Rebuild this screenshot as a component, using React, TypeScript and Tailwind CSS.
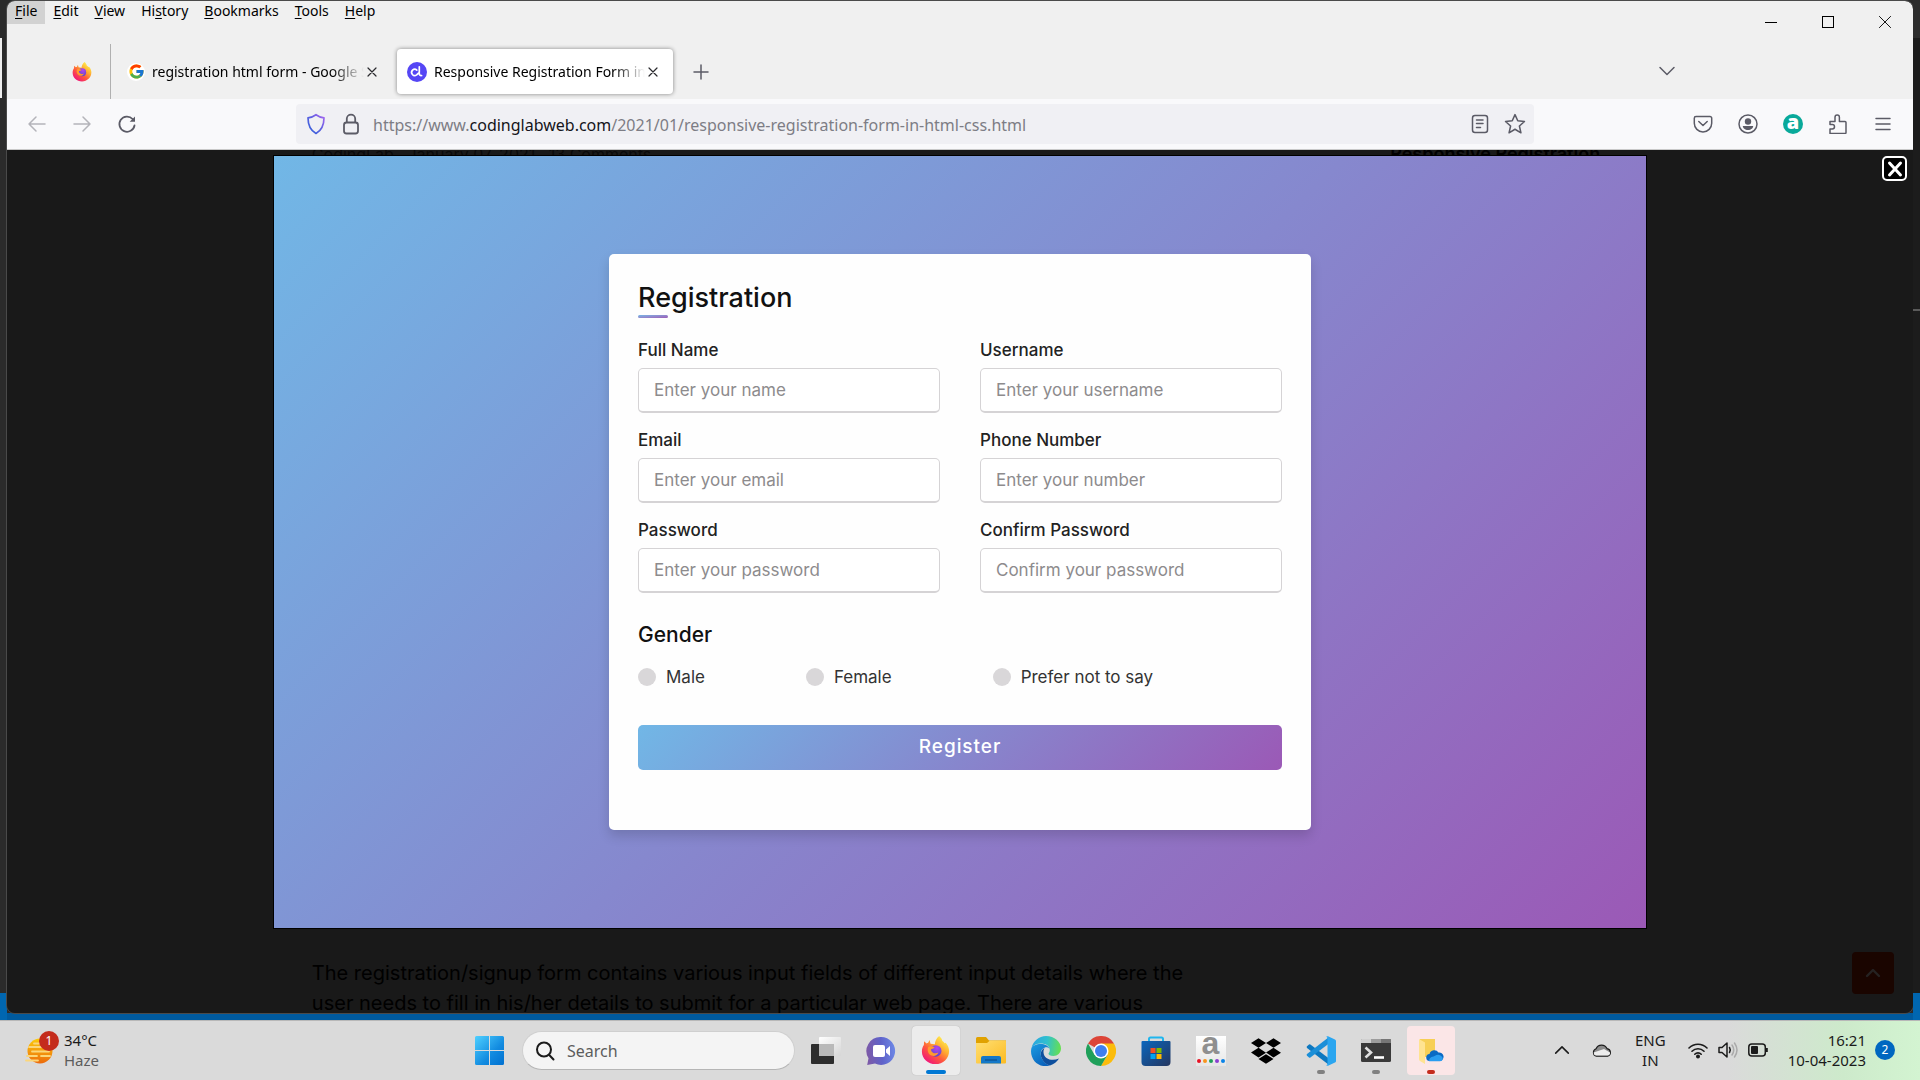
import React, { useId } from "react";
import { FcGoogle } from "react-icons/fc";
import { FaDropbox } from "react-icons/fa";

const uiFont = "font-['Noto_Sans','Open_Sans',sans-serif]";

function FirefoxLogo({ size }: { size: number }) {
  const id = useId();
  return (
    <svg width={size} height={size} viewBox="0 0 32 32" aria-hidden="true">
      <defs>
        <linearGradient id={`${id}a`} x1="0.85" y1="0.1" x2="0.2" y2="0.95">
          <stop offset="0" stopColor="#fff14f" />
          <stop offset="0.35" stopColor="#ffa930" />
          <stop offset="0.62" stopColor="#ff5a3c" />
          <stop offset="1" stopColor="#f0147c" />
        </linearGradient>
        <radialGradient id={`${id}b`} cx="0.6" cy="0.25" r="0.8">
          <stop offset="0" stopColor="#b645f0" />
          <stop offset="1" stopColor="#5147c8" />
        </radialGradient>
      </defs>
      <path
        d="M20 0c2 1.600 3.200 3.500 3.600 5.500 1.200.6 2 1.500 2.400 2.500l1.200-.6c2.600 2.800 3.800 6 3.800 9.100C31 25 24.300 31 16 31S1 25 1 17c0-3 .8-5.300 2.200-7.200l.2-4 2.800 2.400c.5-.3 1-.4 1.500-.4L9.500 4.500l1 4 4.800.6C15.300 6.200 17 2.500 20 0Z"
        fill={`url(#${id}a)`}
      />
      <circle cx="16.200" cy="16.500" r="6.400" fill={`url(#${id}b)`} />
      <path
        d="M8 12c2.500-1.300 5-1 7 .8-1 1.600-3.200 1.600-4 2 .3 3.800 4.500 5.500 8.200 3.400-1.300 3.600-5.200 4.900-8.300 3.100C8 19.700 6.500 15.500 8 12Z"
        fill="#ff9a2e"
      />
    </svg>
  );
}

function CodingLabLogo() {
  return (
    <svg width="20" height="20" viewBox="0 0 20 20" aria-hidden="true">
      <circle cx="10" cy="10" r="10" fill="#5546f5" />
      <path
        d="M9.800 8.100A3.100 3.100 0 1 0 9.600 12.900L12.300 10.500M12.300 4.800v6.700c0 1.400.9 2.200 2.300 2"
        fill="none"
        stroke="#fff"
        strokeWidth="1.700"
        strokeLinecap="round"
        strokeLinejoin="round"
      />
    </svg>
  );
}

function Line({
  children,
  size = 20,
  w = 1.5,
  className = "text-[#5b5b66]",
}: {
  children: React.ReactNode;
  size?: number;
  w?: number;
  className?: string;
}) {
  return (
    <svg
      width={size}
      height={size}
      viewBox="0 0 20 20"
      fill="none"
      stroke="currentColor"
      strokeWidth={w}
      strokeLinecap="round"
      strokeLinejoin="round"
      className={`shrink-0 ${className}`}
      aria-hidden="true"
    >
      {children}
    </svg>
  );
}

const menus: [string, string, string][] = [
  ["", "F", "ile"],
  ["", "E", "dit"],
  ["", "V", "iew"],
  ["Hi", "s", "tory"],
  ["", "B", "ookmarks"],
  ["", "T", "ools"],
  ["", "H", "elp"],
];

function BrowserHeader() {
  return (
    <header className="flex bg-[#f0f0f0] text-black">
      <div className="min-w-0 flex-1">
        <nav className="flex h-[23px]" aria-label="Menu bar">
          {menus.map(([a, u, b], i) => (
            <button
              key={b}
              className={
                i === 0
                  ? "bg-[#d2d2d2] px-2 pb-1 text-sm leading-5"
                  : "px-2 pb-1 text-sm leading-5"
              }
            >
              {a}
              <u className="underline-offset-2">{u}</u>
              {b}
            </button>
          ))}
        </nav>
        <div className="flex h-[75px] items-center pt-5" role="tablist">
          <button
            role="tab"
            aria-label="Firefox"
            className="flex h-full w-[104px] items-center justify-end border-r border-[#b0b0b0] pr-[18px]"
          >
            <FirefoxLogo size={20} />
          </button>
          <div className="flex h-[45px] w-[282px] items-center pl-4">
            <button role="tab" className="flex min-w-0 flex-1 items-center gap-[7px] text-sm">
              <span className="flex size-[18px] shrink-0 items-center justify-center rounded-full bg-white">
                <FcGoogle size={17} />
              </span>
              <span className="overflow-hidden whitespace-nowrap [mask-image:linear-gradient(to_right,black_85%,transparent)]">
                registration html form - Google Search
              </span>
            </button>
            <button aria-label="Close tab" className="mr-[13px]">
              <Line size={16} w={1.5} className="text-[#2a2a2e]">
                <path d="M5 5l10 10M15 5L5 15" />
              </Line>
            </button>
          </div>
          <div className="ml-1 flex h-[45px] w-[276px] items-center rounded bg-white pl-2.5 shadow-[0_0_4px_rgba(0,0,0,0.45)]">
            <button
              role="tab"
              aria-selected="true"
              className="flex min-w-0 flex-1 items-center gap-[7px] text-sm"
            >
              <span className="shrink-0">
                <CodingLabLogo />
              </span>
              <span className="overflow-hidden whitespace-nowrap [mask-image:linear-gradient(to_right,black_85%,transparent)]">
                Responsive Registration Form in HTML
              </span>
            </button>
            <button aria-label="Close tab" className="mr-3">
              <Line size={16} className="text-[#2a2a2e]">
                <path d="M5 5l10 10M15 5L5 15" />
              </Line>
            </button>
          </div>
          <button aria-label="New tab" className="ml-[18px]">
            <Line>
              <path d="M10 3v14M3 10h14" />
            </Line>
          </button>
          <button aria-label="List all tabs" className="mr-[66px] ml-auto">
            <Line>
              <path d="M3 5.500l7 7 7-7" />
            </Line>
          </button>
        </div>
      </div>
      <div className="grid h-[42px] w-[170px] grid-cols-3">
        <button aria-label="Minimize" className="grid place-items-center">
          <span className="h-px w-3 bg-black" />
        </button>
        <button aria-label="Maximize" className="grid place-items-center">
          <span className="size-3 border border-black" />
        </button>
        <button aria-label="Close" className="grid place-items-center">
          <Line size={14} w={1.3} className="text-black">
            <path d="M2 2l16 16M18 2L2 18" />
          </Line>
        </button>
      </div>
    </header>
  );
}

function Toolbar() {
  return (
    <div className="flex h-[51px] shrink-0 items-center border-b border-[#c9c9c9] bg-[#f9f9fb] pl-5">
      <div className="flex w-[269px] shrink-0 gap-[25px]">
        <button aria-label="Back">
          <Line className="text-[#b4b4ba]">
            <path d="M18 10H2M9 3l-7 7 7 7" />
          </Line>
        </button>
        <button aria-label="Forward">
          <Line className="text-[#b4b4ba]">
            <path d="M2 10h16M11 3l7 7-7 7" />
          </Line>
        </button>
        <button aria-label="Reload">
          <Line w={1.8}>
            <path d="M17.500 11.500A7.600 7.600 0 1 1 15.600 5" />
            <path d="M18 2.500v5.300h-5.300z" fill="currentColor" stroke="none" />
          </Line>
        </button>
      </div>
      <div className="flex h-10 flex-1 items-center rounded bg-[#f0f0f4] pr-2 pl-2.5">
        <svg width="20" height="22" viewBox="0 0 20 22" aria-hidden="true">
          <defs>
            <linearGradient id="shield" x1="0" y1="1" x2="1" y2="0">
              <stop offset="0" stopColor="#2f62d9" />
              <stop offset="0.5" stopColor="#5a5fe0" />
              <stop offset="1" stopColor="#a866f0" />
            </linearGradient>
          </defs>
          <path
            d="M10 1.700c2.300 1.700 5 2.700 8 3.100 0 7.600-2.500 12.700-8 15.700-5.500-3-8-8.100-8-15.700 3-.4 5.700-1.400 8-3.100Z"
            fill="none"
            stroke="url(#shield)"
            strokeWidth="1.700"
            strokeLinejoin="round"
          />
        </svg>
        <svg width="20" height="22" viewBox="0 0 20 22" className="ml-[15px]" aria-hidden="true">
          <g fill="none" stroke="#5b5b66" strokeWidth="1.800">
            <rect x="3" y="9.500" width="14" height="11" rx="2.500" />
            <path d="M5.800 9.500V5.800a4.200 4.200 0 0 1 8.400 0v3.700" />
          </g>
        </svg>
        <div
          role="textbox"
          aria-label="Address"
          className="ml-3 min-w-0 flex-1 pt-0.5 text-base whitespace-nowrap text-[#7d7d85]"
        >
          https://www.<span className="text-[#15141a]">codinglabweb.com</span>
          /2021/01/responsive-registration-form-in-html-css.html
        </div>
        <button aria-label="Reader view">
          <Line>
            <rect x="2.500" y="1.500" width="15" height="17" rx="2.500" />
            <path d="M6.500 6h6.500M6.500 9.500h6.500M6.500 13.500h4" />
          </Line>
        </button>
        <button aria-label="Bookmark this page" className="ml-3.5">
          <Line size={22} w={1.4}>
            <path d="M10 1.500l2.500 5.600 6.100.6-4.600 4.100 1.400 6.200-5.400-3.200L4.600 18 6 11.800 1.400 7.700l6.100-.6z" />
          </Line>
        </button>
      </div>
      <div className="ml-[159px] flex items-center gap-[25px] pr-5">
        <button aria-label="Save to Pocket">
          <Line>
            <path d="M3 2.500h14a1.700 1.700 0 0 1 1.700 1.700v5a8.700 8.700 0 0 1-17.400 0v-5A1.700 1.700 0 0 1 3 2.500Z" />
            <path d="M5.800 7.500L10 11.500l4.200-4" />
          </Line>
        </button>
        <button aria-label="Account">
          <Line>
            <circle cx="10" cy="10" r="9" />
            <circle cx="10" cy="7.500" r="3.200" fill="currentColor" stroke="none" />
            <path d="M4.800 12h10.400c0 2-2.200 4-5.200 4s-5.200-2-5.200-4Z" fill="currentColor" stroke="none" />
          </Line>
        </button>
        <button
          aria-label="Extension"
          className="flex size-5 items-start justify-center rounded-full bg-[#09a99a] font-['Open_Sans',sans-serif] text-xl leading-4 font-extrabold text-white"
        >
          a
        </button>
        <button aria-label="Extensions">
          <Line>
            <path d="M2 19.500V15h2.300a2.200 2.200 0 0 0 0-4.400H2V7.500h5V3.300a2.200 2.200 0 0 1 4.400 0v4.200H17a1 1 0 0 1 1 1v10a1 1 0 0 1-1 1Z" />
          </Line>
        </button>
        <button aria-label="Application menu">
          <Line>
            <path d="M3 4.500h14M3 10h14M3 15.500h14" />
          </Line>
        </button>
      </div>
    </div>
  );
}

const fields = [
  ["name", "Full Name", "Enter your name", "text"],
  ["username", "Username", "Enter your username", "text"],
  ["email", "Email", "Enter your email", "text"],
  ["phone", "Phone Number", "Enter your number", "text"],
  ["password", "Password", "Enter your password", "password"],
  ["confirm", "Confirm Password", "Confirm your password", "password"],
];

function RegistrationForm() {
  return (
    <form
      onSubmit={(e) => e.preventDefault()}
      className="w-[702px] max-w-full rounded-[5px] bg-[#fefefe] px-[29px] pt-6 pb-[60px] shadow-[0_6px_12px_rgba(0,0,0,0.15)]"
    >
      <h1 className="relative text-[27px] leading-10 font-medium text-[#111] after:absolute after:bottom-0 after:left-0 after:h-[3px] after:w-[30px] after:rounded after:bg-linear-to-br after:from-[#71b7e6] after:to-[#9b59b6]">
        Registration
      </h1>
      <div className="mt-5 grid grid-cols-2 gap-x-10 gap-y-[15px]">
        {fields.map(([id, label, hint, type]) => (
          <div key={id}>
            <label htmlFor={id} className="block text-[17px] leading-6 font-medium text-[#222]">
              {label}
            </label>
            <input
              id={id}
              type={type}
              placeholder={hint}
              className="mt-1.5 h-[45px] w-full rounded-[5px] border border-b-2 border-[#d5d3d5] bg-white px-[15px] text-[17px] placeholder:text-[#8d8b8d]"
            />
          </div>
        ))}
      </div>
      <fieldset className="mt-7">
        <legend className="text-[21px] leading-7 font-medium text-[#111]">Gender</legend>
        <div className="mt-4 flex w-4/5 justify-between">
          {["Male", "Female", "Prefer not to say"].map((g) => (
            <label key={g} className="flex items-center gap-2.5 text-[17px] leading-6 text-[#333]">
              <input
                type="radio"
                name="gender"
                className="size-[18px] appearance-none rounded-full bg-[#d9d7d9] checked:bg-[#9b59b6]"
              />
              {g}
            </label>
          ))}
        </div>
      </fieldset>
      <button className="mt-9 h-[45px] w-full rounded-[5px] bg-[linear-gradient(135deg,#71b7e6,#9b59b6)] text-[19px] font-medium tracking-wider text-white">
        Register
      </button>
    </form>
  );
}

function Page() {
  return (
    <main className="relative min-h-0 flex-1 overflow-hidden bg-[#191919] font-[Inter,sans-serif]">
      <div className="mx-auto w-[72%]">
        <div className="flex h-1.5 gap-[260px] overflow-hidden pl-[38px] whitespace-nowrap text-black/60">
          <p className="leading-2">CodingLab &nbsp; January 07, 2021 &nbsp; 13 Comments</p>
          <p className="ml-auto pr-[46px] text-lg leading-2 font-semibold text-black">
            Responsive Registration
          </p>
        </div>
        <div className="flex aspect-[1372/772] items-center justify-center bg-[linear-gradient(135deg,#71b7e6,#9b59b6)] outline outline-black">
          <RegistrationForm />
        </div>
        <p className="mt-[30px] pl-[38px] text-xl leading-[30px] whitespace-nowrap text-black">
          The registration/signup form contains various input fields of different input details where
          the
          <br />
          user needs to fill in his/her details to submit for a particular web page. There are various
        </p>
      </div>
      <button
        aria-label="Close image"
        className="absolute top-1.5 right-1.5 grid size-[25px] place-items-center rounded-[5px] border-2 border-white bg-black"
      >
        <Line size={20} w={3} className="text-white">
          <path d="M4.500 4l11 12M15.500 4l-11 12" />
        </Line>
      </button>
      <button
        aria-label="Back to top"
        className="absolute right-[19px] bottom-[19px] grid size-[42px] place-items-center rounded-sm bg-[#1a0500]"
      >
        <Line size={20} w={2.4} className="text-[#262322]">
          <path d="M4 13l6-6 6 6" />
        </Line>
      </button>
    </main>
  );
}

function WindowsLogo() {
  return (
    <svg width="29" height="29" viewBox="0 0 29 29" aria-hidden="true">
      <defs>
        <linearGradient id="win" x1="0" y1="0" x2="1" y2="1">
          <stop offset="0" stopColor="#4fd0ff" />
          <stop offset="0.6" stopColor="#128be0" />
          <stop offset="1" stopColor="#0070d0" />
        </linearGradient>
      </defs>
      <path
        d="M1.500 0H14v14H0V1.500Q0 0 1.500 0ZM15 0h12.500Q29 0 29 1.500V14H15ZM0 15h14v14H1.500Q0 29 0 27.500ZM15 15h14v12.500Q29 29 27.500 29H15Z"
        fill="url(#win)"
      />
    </svg>
  );
}

function TaskViewIcon() {
  return (
    <svg width="30" height="30" viewBox="0 0 30 30" aria-hidden="true">
      <defs>
        <linearGradient id="tvf" x1="0" y1="0" x2="1" y2="1">
          <stop offset="0" stopColor="#fff" />
          <stop offset="1" stopColor="#d6d6d6" />
        </linearGradient>
      </defs>
      <rect x="0" y="8" width="23" height="20" rx="1" fill="#2d2d2d" />
      <rect x="8" y="1" width="22" height="19" rx="1" fill="url(#tvf)" />
      <rect x="8" y="8" width="15" height="12" fill="#b9b9b9" />
    </svg>
  );
}

function ChatIcon() {
  return (
    <svg width="30" height="30" viewBox="0 0 30 30" aria-hidden="true">
      <defs>
        <linearGradient id="chat" x1="0" y1="0.3" x2="1" y2="0.2">
          <stop offset="0" stopColor="#7c5aa8" />
          <stop offset="0.5" stopColor="#5f62c9" />
          <stop offset="1" stopColor="#6d8ae8" />
        </linearGradient>
      </defs>
      <path d="M15 1a14 14 0 1 1-6 26.600L1.200 29l1.300-6.700A14 14 0 0 1 15 1Z" fill="url(#chat)" />
      <rect x="7" y="9" width="12" height="12" rx="2" fill="#fff" />
      <path d="M20 13.500l4-3.500v10l-4-3.500z" fill="#fff" />
    </svg>
  );
}

function FolderIcon() {
  return (
    <svg width="30" height="28" viewBox="0 0 30 28" aria-hidden="true">
      <defs>
        <linearGradient id="fold" x1="0" y1="0" x2="1" y2="1">
          <stop offset="0" stopColor="#ffdf73" />
          <stop offset="1" stopColor="#fcbb22" />
        </linearGradient>
      </defs>
      <path d="M0 1.500Q0 0 1.500 0H10l3 3.500H30V12H0Z" fill="#e0a100" />
      <path d="M0 6h11l3-2.500H29q1 0 1 1V25.500q0 1-1 1H1q-1 0-1-1Z" fill="url(#fold)" />
      <path d="M5 26.500V21q0-2 2-2h16q2 0 2 2v5.500z" fill="#1478c8" />
      <path d="M9 23h12" stroke="#0b4f8c" strokeWidth="1.200" />
    </svg>
  );
}

function EdgeIcon() {
  return (
    <svg width="30" height="30" viewBox="0 0 30 30" aria-hidden="true">
      <defs>
        <linearGradient id="e1" x1="0" y1="0.4" x2="1" y2="0.5">
          <stop offset="0" stopColor="#2aa5e0" />
          <stop offset="0.5" stopColor="#30c0cf" />
          <stop offset="1" stopColor="#66e050" />
        </linearGradient>
        <linearGradient id="e2" x1="0" y1="0" x2="0.6" y2="1">
          <stop offset="0" stopColor="#1b9de2" />
          <stop offset="1" stopColor="#0a63bd" />
        </linearGradient>
      </defs>
      <path
        d="M.5 12C2 5 8 0 15 0c8.500 0 15 6 15 12.500 0 4.500-3.500 7.500-7.500 7.500-3.500 0-5-1-5-2.200 0-.8 1.300-1.200 1.300-3.800C18.800 9.500 14 7.500 10 7.500 5.500 7.500 2 9.500.5 12Z"
        fill="url(#e1)"
      />
      <path
        d="M.3 12.500C1.500 9.500 5.500 8 9.500 8c4.500 0 8 2 9 4.700-1.500-1.500-3.300-1.500-4.500-1.200C10.500 12.500 9 16 10 20c1 4.500 5 8.500 9 9.400C9 32.500 0 25.500 0 15Z"
        fill="url(#e2)"
      />
      <path
        d="M13.500 12c-3 1.500-4.500 5-3.300 9 1.300 4.300 5 7.700 8.800 8.400 4-1.100 7-3.500 9-6.900-6.500 3-15 1-15.500-6-.1-1.800.3-3.300 1-4.500Z"
        fill="#0e4f9e"
      />
    </svg>
  );
}

function ChromeIcon() {
  return (
    <svg width="30" height="30" viewBox="0 0 30 30" aria-hidden="true">
      <path d="M15 15L2 7.500A15 15 0 0 1 28 7.500Z" fill="#dc4437" />
      <path d="M15 7.500h13A15 15 0 0 1 15 30l6.500-11.250Z" fill="#fbbc0c" />
      <path d="M15 30A15 15 0 0 1 2 7.500l6.500 11.250 13 0Z" fill="#1fa05a" />
      <circle cx="15" cy="15" r="7.500" fill="#fff" />
      <circle cx="15" cy="15" r="6" fill="#3f7fee" />
    </svg>
  );
}

function StoreIcon() {
  return (
    <svg width="30" height="30" viewBox="0 0 30 30" aria-hidden="true">
      <defs>
        <linearGradient id="store" x1="0" y1="0" x2="1" y2="1">
          <stop offset="0" stopColor="#0a66bd" />
          <stop offset="1" stopColor="#25365f" />
        </linearGradient>
      </defs>
      <path d="M8 6V3q0-1.500 1.500-1.500h11Q22 1.500 22 3v3" fill="none" stroke="#1fb6ee" strokeWidth="2" />
      <path d="M.5 6q0-1 1-1h27q1 0 1 1v20q0 4-4 4h-21q-4 0-4-4Z" fill="url(#store)" />
      <path d="M9.500 12h5v5h-5z" fill="#f25022" />
      <path d="M15.500 12h5v5h-5z" fill="#7fba00" />
      <path d="M9.500 18h5v5h-5z" fill="#00a4ef" />
      <path d="M15.500 18h5v5h-5z" fill="#ffb900" />
    </svg>
  );
}

function AmazonIcon() {
  return (
    <span className="flex size-[30px] flex-col items-center justify-between bg-linear-to-b from-white to-[#e6e6e6] pb-[3px] font-['Liberation_Sans',sans-serif] text-[32px] leading-[14px] font-bold text-[#8f8f8f]">
      <span>a</span>
      <span className="flex gap-0.5">
        <i className="size-1 rounded-full bg-[#e81123]" />
        <i className="size-1 rounded-full bg-[#f7941d]" />
        <i className="size-1 rounded-full bg-[#1fa05a]" />
        <i className="size-1 rounded-full bg-[#8a3fd1]" />
        <i className="size-1 rounded-full bg-[#0a84e8]" />
      </span>
    </span>
  );
}

function VsCodeIcon() {
  return (
    <svg width="30" height="30" viewBox="0 0 30 30" aria-hidden="true">
      <path d="M1 10.300L3 8.500q.7-.5 1.400 0L23 22.500V29L1 12q-.8-.9 0-1.700Z" fill="#0d78c0" />
      <path d="M1 19.700L3 21.500q.7.500 1.400 0L23 7.500V1L1 18q-.8.900 0 1.700Z" fill="#1b8fd8" />
      <path d="M22 0.300L29 3.500q1 .5 1 1.500v20q0 1-1 1.500l-7 3.200q-1 .3-2-.7 1.500.5 1.500-1.500V2.500Q21.500 0.500 20 1q1-1 2-.7Z" fill="#2ba6f0" />
    </svg>
  );
}

function TerminalIcon() {
  return (
    <svg width="30" height="24" viewBox="0 0 30 24" aria-hidden="true">
      <rect width="30" height="23" rx="1.500" fill="#3a3a3a" />
      <path d="M1 0h9v4H0V1q0-1 1-1Z" fill="#d0d0d0" />
      <path d="M10 0h10v4H10z" fill="#9c9c9c" />
      <path d="M20 0h9q1 0 1 1v3H20z" fill="#767676" />
      <path d="M4.500 8.500l5.500 5-5.500 5" fill="none" stroke="#e0e0e0" strokeWidth="2.600" />
      <path d="M13 18.500h10" stroke="#fff" strokeWidth="2.600" />
    </svg>
  );
}

function OneDriveFolderIcon() {
  return (
    <svg width="26" height="28" viewBox="0 0 26 28" aria-hidden="true">
      <path d="M2 2h15v18H2z" fill="#f7cf55" />
      <path d="M1 2l6 3.500V27L2 24q-1-.5-1-2Z" fill="#ffe391" />
      <path d="M12 24a3.500 3.500 0 0 1-.5-7 5 5 0 0 1 9-1.500 4.300 4.300 0 0 1 1.500 8.500Z" fill="#0a6ac4" />
      <path d="M11 24.300q0-4 4.500-4.800L18.500 18q2-.8 4 .5 2.500 1 2.300 3.500-.4 2.300-2.800 2.300Z" fill="#2a9df0" />
    </svg>
  );
}

const taskIcons: { name: string; icon: React.ReactNode; box?: string; dot?: string }[] = [
  { name: "Task View", icon: <TaskViewIcon /> },
  { name: "Chat", icon: <ChatIcon /> },
  { name: "Firefox", icon: <FirefoxLogo size={29} />, box: "bg-[#ececec] shadow-[0_0_1px_rgba(0,0,0,0.25)]", dot: "w-5 bg-[#0078d4]" },
  { name: "File Explorer", icon: <FolderIcon /> },
  { name: "Edge", icon: <EdgeIcon /> },
  { name: "Chrome", icon: <ChromeIcon /> },
  { name: "Microsoft Store", icon: <StoreIcon /> },
  { name: "Amazon", icon: <AmazonIcon /> },
  { name: "Dropbox", icon: <FaDropbox size={30} color="#000" /> },
  { name: "Visual Studio Code", icon: <VsCodeIcon />, dot: "w-2 bg-[#808080]" },
  { name: "Terminal", icon: <TerminalIcon />, dot: "w-2 bg-[#808080]" },
  { name: "OneDrive", icon: <OneDriveFolderIcon />, box: "bg-[#fbe6e7]", dot: "w-2 bg-[#c42b1c]" },
];

function Taskbar() {
  return (
    <footer className="grid h-[60px] shrink-0 grid-cols-[1fr_auto_1fr] items-center border-t border-[#b8b8b8] bg-[linear-gradient(to_right,#dadada_90%,#cdeacb_96%,#d3f4d1)] text-[#1b1b1b]">
      <button className="flex items-center gap-[5px] pb-0.5 pl-[25px] text-left text-[15px] leading-5">
        <span className="relative size-[34px]">
          <svg width="30" height="34" viewBox="0 0 30 34" aria-hidden="true">
            <defs>
              <linearGradient id="sun" x1="0" y1="0" x2="0" y2="1">
                <stop offset="0" stopColor="#fccb0a" />
                <stop offset="1" stopColor="#ec6a0c" />
              </linearGradient>
            </defs>
            <circle cx="15" cy="18" r="12.500" fill="url(#sun)" />
            <path
              d="M4 14h13M7 18.500h17M2 23h10M16 23h9M1 27.500h12M9 10.500h8"
              stroke="#fbd67a"
              strokeWidth="1.800"
              strokeLinecap="round"
            />
          </svg>
          <span className="absolute -top-0.5 right-0 grid size-5 place-items-center rounded-full bg-[#c42b1c] text-xs text-white">
            1
          </span>
        </span>
        <span>
          34°C
          <br />
          <span className="text-[#5c5c5c]">Haze</span>
        </span>
      </button>
      <div className="flex items-center">
        <button aria-label="Start" className="mr-[5px] grid h-12 w-[55px] place-items-center">
          <WindowsLogo />
        </button>
        <label className="mr-[3px] flex h-[39px] w-[273px] items-center gap-3 rounded-full border border-[#cfcfcf] border-b-[#b5b5b5] bg-[#f4f4f4] pl-3">
          <Line size={20} w={2} className="text-[#1b1b1b]">
            <circle cx="9" cy="8.500" r="7" />
            <path d="M14 13.700l4.500 4.800" />
          </Line>
          <input
            type="search"
            aria-label="Search"
            placeholder="Search"
            className="w-full min-w-0 bg-transparent pr-4 text-base outline-none placeholder:text-[#5c5c5c]"
          />
        </label>
        {taskIcons.map(({ name, icon, box = "", dot }) => (
          <span key={name} className="flex w-[55px] justify-center">
            <button
              aria-label={name}
              className={`relative grid h-[49px] w-12 place-items-center rounded ${box}`}
            >
              {icon}
              {dot && <i className={`absolute bottom-px h-1 rounded-full ${dot}`} />}
            </button>
          </span>
        ))}
      </div>
      <div className="flex items-center justify-end pr-[25px] pb-0.5 text-[15px] leading-5">
        <button aria-label="Show hidden icons">
          <Line size={18} w={1.7} className="text-[#1b1b1b]">
            <path d="M3 13.500l7-7 7 7" />
          </Line>
        </button>
        <button aria-label="OneDrive" className="ml-[21px]">
          <svg width="20" height="14" viewBox="0 0 20 14" aria-hidden="true">
            <path
              d="M4.500 13.200a3.900 3.900 0 0 1-.4-7.500A6 6 0 0 1 15 5.600a3.900 3.900 0 0 1 .6 7.600Z"
              fill="#8c8c8c"
              stroke="#1b1b1b"
              strokeWidth="1.200"
            />
            <path d="M4 12.600q-2.400-.4-2.400-3L12 6l6 3.500q.5 2.700-2.500 3.100Z" fill="#ededed" />
          </svg>
        </button>
        <button className="ml-[23px] text-center">
          ENG
          <br />
          IN
        </button>
        <button className="ml-[22px] flex items-center gap-2.5" aria-label="Network, volume and battery">
          <Line w={1.6} className="text-[#1b1b1b]">
            <path d="M1 8a12.700 12.700 0 0 1 18 0M4 11.200a8.500 8.500 0 0 1 12 0M6.800 14.200a4.500 4.500 0 0 1 6.400 0" />
            <circle cx="10" cy="16.500" r="1.200" fill="currentColor" />
          </Line>
          <Line w={1.5} className="text-[#1b1b1b]">
            <path d="M1 7.500h3L9 3v14l-5-4.500H1Z" />
            <path d="M11.500 7.500q1.500 2.500 0 5" />
            <path d="M14 5q3.500 5 0 10M16.500 3q5 7 0 14" stroke="#aaa" />
          </Line>
          <svg width="20" height="14" viewBox="0 0 20 14" aria-hidden="true">
            <rect x="0.800" y="1" width="16.500" height="12" rx="3" fill="none" stroke="#1b1b1b" strokeWidth="1.500" />
            <rect x="3" y="3" width="7" height="8" rx="1" fill="#1b1b1b" />
            <path d="M18.800 5v4" stroke="#1b1b1b" strokeWidth="2" />
          </svg>
        </button>
        <button className="ml-5 text-right">
          16:21
          <br />
          10-04-2023
        </button>
        <button
          aria-label="2 notifications"
          className="ml-[9px] grid size-5 place-items-center rounded-full bg-[#0067c0] text-xs text-white"
        >
          2
        </button>
      </div>
    </footer>
  );
}

export default function App() {
  return (
    <div className={`flex h-screen flex-col bg-[#2b2b2b] ${uiFont}`}>
      <div className="flex min-h-0 flex-1 bg-[linear-gradient(to_top,#005a9e_7px,transparent_7px)]">
        <div className="flex w-[7px] shrink-0 flex-col justify-between">
          <span className="mt-[38px] h-[60px] w-0.5 bg-[#eeeeee]" />
          <span className="h-[27px] bg-[#0066b0]" />
        </div>
        <div className="mt-px mb-[7px] flex min-w-0 flex-1 flex-col overflow-hidden rounded-lg outline outline-[#4a4a4a]">
          <BrowserHeader />
          <Toolbar />
          <Page />
        </div>
        <div className="flex w-[7px] shrink-0 flex-col bg-[#1c1c1c]">
          <span className="h-[38px] bg-[#2d2d2d]" />
          <span className="h-[273px] border-b-2 border-[#5a5a5a]" />
          <span className="mt-auto h-[27px] bg-[#0066b0]" />
        </div>
      </div>
      <Taskbar />
    </div>
  );
}
